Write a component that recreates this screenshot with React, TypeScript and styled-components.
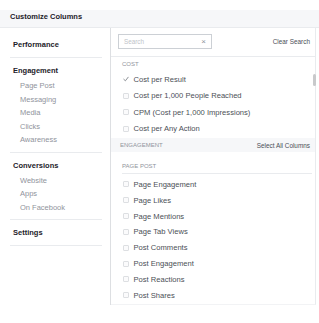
import React from "react";
import styled, { createGlobalStyle } from "styled-components";

const GlobalStyle = createGlobalStyle`
  html, body {
    margin: 0;
    padding: 0;
    background: #ffffff;
    font-family: "Liberation Sans", Arial, sans-serif;
    -webkit-font-smoothing: antialiased;
  }
`;

const Page = styled.div`
  width: 319px;
  height: 323px;
  overflow: hidden;
  background: #ffffff;
`;

const Header = styled.div`
  margin-top: 10px;
  height: 17px;
  line-height: 13px;
  padding-left: 10px;
  box-sizing: content-box;
  background: #f6f7f9;
  border-bottom: 1px solid #e9ebee;
  font-size: 7.5px;
  font-weight: bold;
  color: #1d2129;
`;

const Body = styled.div`
  display: flex;
  height: 277px;
`;

const Nav = styled.div`
  box-sizing: border-box;
  width: 111px;
  padding: 4px 8px 0 10px;
  border-right: 1px solid #dddfe2;
`;

const NavSection = styled.div`
  padding: 6px 0 5px;
  border-bottom: 1px solid #e9ebee;
`;

const NavTitle = styled.div`
  padding-left: 3px;
  line-height: 14px;
  font-size: 7.5px;
  font-weight: bold;
  color: #1d2129;
`;

const NavList = styled.div`
  margin-top: 1px;
`;

const NavItem = styled.div`
  padding-left: 10px;
  line-height: 13.5px;
  font-size: 7.5px;
  color: #90949c;
`;

const Panel = styled.div`
  position: relative;
  box-sizing: border-box;
  width: 205px;
  border-right: 1px solid #e9ebee;
  border-bottom: 1px solid #f2f3f5;
`;

const SearchRow = styled.div`
  height: 29px;
  display: flex;
  align-items: center;
  justify-content: space-between;
  padding: 0 5px 1px 7px;
  box-sizing: border-box;
  border-bottom: 1px solid #e9ebee;
`;

const SearchBox = styled.div`
  box-sizing: border-box;
  width: 94px;
  height: 15px;
  display: flex;
  align-items: center;
  justify-content: space-between;
  padding: 0 5px 0 5px;
  border: 1px solid #ccd0d5;
  font-size: 6.3px;
  color: #bec3c9;
`;

const ClearX = styled.span`
  font-size: 8px;
  color: #90949c;
  line-height: 1;
`;

const LinkText = styled.span`
  font-size: 6.4px;
  color: #4b4f56;
`;

const GroupLabel = styled.div<{ $underline?: boolean }>`
  margin: 0 ${(p) => (p.$underline ? "3px" : "0")} 0 11px;
  padding: ${(p) => (p.$underline ? "9px 0 2px" : "2px 0 0")};
  line-height: 10px;
  font-size: 6px;
  text-transform: uppercase;
  color: #90949c;
  border-bottom: ${(p) => (p.$underline ? "1px solid #e9ebee" : "none")};
`;

const RowList = styled.div<{ $gapTop?: number }>`
  margin-top: ${(p) => p.$gapTop ?? 0}px;
`;

const Row = styled.div<{ $h: number }>`
  height: ${(p) => p.$h}px;
  display: flex;
  align-items: center;
  padding-left: 12px;
  font-size: 7.6px;
  color: #4b4f56;
`;

const Box = styled.span`
  box-sizing: border-box;
  width: 6px;
  height: 6px;
  margin-right: 4.5px;
  border: 1px solid #dddfe2;
  border-radius: 1px;
  background: #fbfbfc;
  flex-shrink: 0;
`;

const Check = styled.svg`
  width: 6px;
  height: 6px;
  margin-right: 4.5px;
  flex-shrink: 0;
`;

const CategoryBar = styled.div`
  height: 14px;
  margin-top: 1px;
  display: flex;
  align-items: center;
  justify-content: space-between;
  padding: 0 5px 0 9px;
  background: #f6f7f9;
`;

const CategoryName = styled.span`
  font-size: 6px;
  text-transform: uppercase;
  color: #90949c;
`;

const ScrollThumb = styled.div`
  position: absolute;
  left: 201.5px;
  top: 46px;
  width: 3px;
  height: 12px;
  border-radius: 2px;
  background: #c8c9cb;
`;

const navSections = [
  { title: "Performance", items: [] as string[] },
  {
    title: "Engagement",
    items: ["Page Post", "Messaging", "Media", "Clicks", "Awareness"],
  },
  { title: "Conversions", items: ["Website", "Apps", "On Facebook"] },
  { title: "Settings", items: [] as string[] },
];

const costRows = [
  { label: "Cost per Result", checked: true },
  { label: "Cost per 1,000 People Reached", checked: false },
  { label: "CPM (Cost per 1,000 Impressions)", checked: false },
  { label: "Cost per Any Action", checked: false },
];

const pagePostRows = [
  "Page Engagement",
  "Page Likes",
  "Page Mentions",
  "Page Tab Views",
  "Post Comments",
  "Post Engagement",
  "Post Reactions",
  "Post Shares",
];

const CheckMark = () => (
  <Check viewBox="0 0 6 6">
    <path
      d="M0.8 3.3 L2.4 4.8 L5.2 1.2"
      fill="none"
      stroke="#7f8389"
      strokeWidth="0.9"
      strokeLinecap="round"
      strokeLinejoin="round"
    />
  </Check>
);

export default function App() {
  return (
    <Page>
      <GlobalStyle />
      <Header>Customize Columns</Header>
      <Body>
        <Nav>
          {navSections.map((s) => (
            <NavSection key={s.title}>
              <NavTitle>{s.title}</NavTitle>
              {s.items.length > 0 && (
                <NavList>
                  {s.items.map((item) => (
                    <NavItem key={item}>{item}</NavItem>
                  ))}
                </NavList>
              )}
            </NavSection>
          ))}
        </Nav>
        <Panel>
          <SearchRow>
            <SearchBox>
              <span>Search</span>
              <ClearX>×</ClearX>
            </SearchBox>
            <LinkText>Clear Search</LinkText>
          </SearchRow>
          <GroupLabel>Cost</GroupLabel>
          <RowList $gapTop={2}>
            {costRows.map((r) => (
              <Row key={r.label} $h={16.5}>
                {r.checked ? <CheckMark /> : <Box />}
                {r.label}
              </Row>
            ))}
          </RowList>
          <CategoryBar>
            <CategoryName>Engagement</CategoryName>
            <LinkText>Select All Columns</LinkText>
          </CategoryBar>
          <GroupLabel $underline>Page Post</GroupLabel>
          <RowList $gapTop={2.5}>
            {pagePostRows.map((label) => (
              <Row key={label} $h={15.85}>
                <Box />
                {label}
              </Row>
            ))}
          </RowList>
          <ScrollThumb />
        </Panel>
      </Body>
    </Page>
  );
}
